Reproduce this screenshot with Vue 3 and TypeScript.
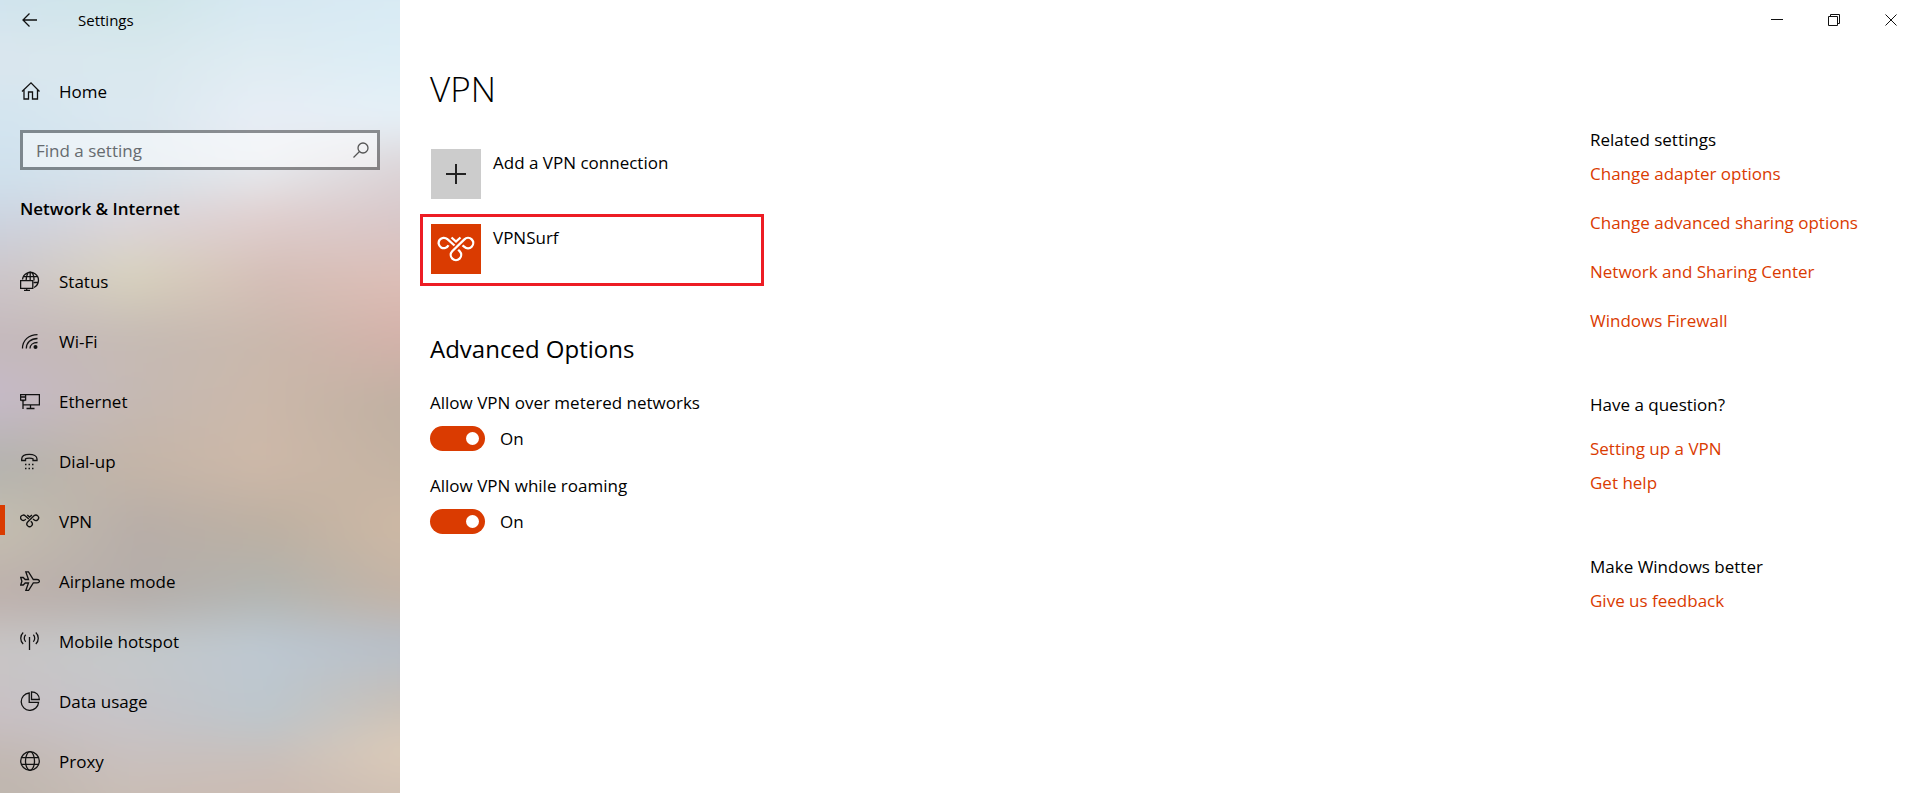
<script setup lang="ts">
import { ref } from 'vue'

interface NavItem {
  id: string
  label: string
}

const navItems: NavItem[] = [
  { id: 'status', label: 'Status' },
  { id: 'wifi', label: 'Wi-Fi' },
  { id: 'ethernet', label: 'Ethernet' },
  { id: 'dialup', label: 'Dial-up' },
  { id: 'vpn', label: 'VPN' },
  { id: 'airplane', label: 'Airplane mode' },
  { id: 'hotspot', label: 'Mobile hotspot' },
  { id: 'data', label: 'Data usage' },
  { id: 'proxy', label: 'Proxy' },
]

const vpnPath =
  'M17.500 21.300A5.200 5.200 0 1 1 16.400 15.200L23.500 21.500M20.500 13.500l4.500 4 4.500-4M31.500 21.300l1.900 1.500A5.200 5.200 0 1 0 33.400 15.300L21.200 27.300A5.200 5.200 0 1 0 28.700 27.300L27.200 25.800'

const active = ref('vpn')
const query = ref('')
const metered = ref(true)
const roaming = ref(true)

const relatedLinks: string[] = [
  'Change adapter options',
  'Change advanced sharing options',
  'Network and Sharing Center',
  'Windows Firewall',
]
</script>

<template>
  <div class="window">
    <aside class="sidebar">
      <div class="backdrop" aria-hidden="true">
        <div class="washes">
          <div class="wash wash-1"></div>
          <div class="wash wash-2"></div>
          <div class="wash wash-3"></div>
          <div class="wash wash-4"></div>
        </div>
      </div>

      <header class="titlebar">
        <button class="back" type="button" aria-label="Back">
          <svg width="16" height="14" viewBox="0 0 16 14"><path d="M7.500 .5 1 7l6.500 6.500M1 7h14" /></svg>
        </button>
        <span class="app-name">Settings</span>
      </header>

      <a class="home" href="#home">
        <svg class="icon" width="20" height="20" viewBox="0 0 20 20">
          <path d="M2 10.500 11 1.800l8.500 8.700M4 8.700v9.300h4.500v-7h4v7h5V8.700" />
        </svg>
        <span class="nav-label">Home</span>
      </a>

      <form class="search" role="search" @submit.prevent>
        <input v-model="query" type="text" placeholder="Find a setting" aria-label="Find a setting" />
        <button type="submit" aria-label="Search">
          <svg width="16" height="16" viewBox="0 0 16 16"><circle cx="10" cy="6" r="5" /><path d="M6.500 9.500.5 15.500" /></svg>
        </button>
      </form>

      <h2 class="section">Network &amp; Internet</h2>

      <nav class="nav" aria-label="Network &amp; Internet">
        <a
          v-for="item in navItems"
          :key="item.id"
          :href="'#' + item.id"
          class="nav-item"
          :class="{ active: active === item.id }"
          @click.prevent="active = item.id"
        >
          <svg class="icon" width="20" height="20" viewBox="0 0 20 20">
            <g v-if="item.id === 'status'">
              <path d="M2.500 8.500a8 8 0 1 1 11.500 8M3.500 5.700h14M13.500 11.500h4.500M6.200 9c0-4 1.500-8 4-8s4 4 3.800 8.500M10.200 1v8" />
              <path d="M.6 9.600h12.200v7.800H.6zM6.700 17.500v2M4 19.400h6" />
            </g>
            <g v-else-if="item.id === 'wifi'">
              <path d="M2.500 17.500C2.500 9 9 3.600 17.500 3.600M6.300 17.500c0-6 4.500-10 11.200-10M10 17.500c0-3.500 3-6 7.500-6" />
              <circle class="solid" cx="15.500" cy="16" r="2" />
            </g>
            <g v-else-if="item.id === 'ethernet'">
              <path d="M6 3.700h13.400v10.100H3.500M10.500 14v3.500M6.500 17.500h8M3 10v8" />
              <path d="M.6 3.600h5v5.500h-5zM.6 6h5M1.500 9.500h3" />
            </g>
            <g v-else-if="item.id === 'dialup'">
              <path d="M1.700 9.500V8c0-3 3.500-4.600 7.600-4.600S17 5 17 8v1.500h-4V7.800c-1.500-1-6-1-7.500 0v1.700z" />
              <path class="dots" d="M5 13.500h1.500M8.500 13.500H10M12 13.500h1.500M5 17.500h1.500M8.500 17.500H10M12 17.500h1.500" />
            </g>
            <g v-else-if="item.id === 'vpn'" class="small-vpn" transform="scale(.52) translate(-6.500 -6)">
              <path :d="vpnPath" />
            </g>
            <g v-else-if="item.id === 'airplane'">
              <path d="M.7 6.500h2.500l2 2h3.300L5.800.8h2.700l4.800 7.700H17c1.300 0 2.400.7 2.400 1.700s-1.100 1.700-2.400 1.700h-3.700L8.500 19.500H5.800L8.500 12H5.200l-2 2H.7l1.200-3.800z" />
            </g>
            <g v-else-if="item.id === 'hotspot'">
              <path d="M9.500 6v13M3.200 1.500C-.1 4.500-.1 10 3.200 13M5.700 3.700C3.800 5.500 3.800 9 5.700 10.800M15.800 1.500c3.300 3 3.300 8.500 0 11.500M13.300 3.700c1.900 1.800 1.900 5.300 0 7.100" />
            </g>
            <g v-else-if="item.id === 'data'">
              <path d="M9.200 2A8.700 8.700 0 1 0 18.600 11.300H9.200z" />
              <path d="M11.500.8c4.500 0 7.800 3 7.800 7.700h-7.800z" />
            </g>
            <g v-else>
              <circle cx="10" cy="10" r="9.300" />
              <ellipse cx="10" cy="10" rx="4.500" ry="9.300" />
              <path d="M1.500 6.700h17M1.500 13.300h17" />
            </g>
          </svg>
          <span class="nav-label">{{ item.label }}</span>
        </a>
      </nav>
    </aside>

    <div class="content">
      <div class="controls">
        <button type="button" aria-label="Minimize">
          <svg width="12" height="12" viewBox="0 0 12 12"><path d="M0 5.500h12" /></svg>
        </button>
        <button type="button" aria-label="Restore">
          <svg width="12" height="12" viewBox="0 0 12 12"><path d="M.5 2.500h9v9h-9zM2.500 2.500v-2h9v9h-2" /></svg>
        </button>
        <button type="button" aria-label="Close">
          <svg width="12" height="12" viewBox="0 0 12 12"><path d="m.5.5 11 11M11.500.5l-11 11" /></svg>
        </button>
      </div>

      <div class="columns">
        <main class="main">
          <h1>VPN</h1>

          <button class="entry" type="button">
            <span class="tile add">
              <svg width="20" height="20" viewBox="0 0 20 20"><path d="M10 0v20M0 10h20" /></svg>
            </span>
            <span class="entry-label">Add a VPN connection</span>
          </button>

          <button class="entry highlighted" type="button">
            <span class="tile vpn-tile">
              <svg width="50" height="50" viewBox="0 0 50 50"><path :d="vpnPath" /></svg>
            </span>
            <span class="entry-label">VPNSurf</span>
          </button>

          <h2>Advanced Options</h2>

          <div class="option">
            <label for="metered">Allow VPN over metered networks</label>
            <div class="switch">
              <input id="metered" v-model="metered" type="checkbox" role="switch" />
              <span>{{ metered ? 'On' : 'Off' }}</span>
            </div>
          </div>
          <div class="option">
            <label for="roaming">Allow VPN while roaming</label>
            <div class="switch">
              <input id="roaming" v-model="roaming" type="checkbox" role="switch" />
              <span>{{ roaming ? 'On' : 'Off' }}</span>
            </div>
          </div>
        </main>

        <aside class="related">
          <section>
            <h3>Related settings</h3>
            <div class="links spaced">
              <a v-for="link in relatedLinks" :key="link" href="#related">{{ link }}</a>
            </div>
          </section>
          <section>
            <h3>Have a question?</h3>
            <div class="links help">
              <a href="#setup">Setting up a VPN</a>
              <a href="#help">Get help</a>
            </div>
          </section>
          <section>
            <h3>Make Windows better</h3>
            <div class="links">
              <a href="#feedback">Give us feedback</a>
            </div>
          </section>
        </aside>
      </div>
    </div>
  </div>
</template>

<style>
body {
  margin: 0;
  background: #fff;
}
</style>

<style scoped>
.window {
  display: flex;
  min-height: 100vh;
  color: #000;
  font-family: "Segoe UI", "Open Sans", "Noto Sans", sans-serif;
  font-size: 17px;
  line-height: 24px;
}

button {
  padding: 0;
  border: 0;
  background: none;
  color: inherit;
  font: inherit;
  text-align: left;
}

a {
  color: inherit;
  text-decoration: none;
}

h1,
h2,
h3 {
  margin: 0;
  font-size: 17px;
  font-weight: 400;
}

svg {
  display: block;
  fill: none;
  stroke: #111;
  stroke-width: 1.3;
}

.solid {
  fill: #111;
  stroke: none;
}

.dots {
  stroke-width: 1.4;
}

.small-vpn {
  stroke-width: 2.6;
}

/* Sidebar */
.sidebar {
  position: relative;
  box-sizing: border-box;
  flex: 0 0 400px;
  isolation: isolate;
}

.backdrop {
  position: absolute;
  inset: 0;
  z-index: -1;
  overflow: hidden;
}

.washes {
  position: absolute;
  inset: -36px;
  filter: blur(14px);
}

.wash {
  position: absolute;
  inset: 0;
}

.wash-1 {
  background: linear-gradient(#d0e4ee 4%, #dbe7ee 11%, #d3e5f0 18%, #cfe0ec 25%, #cdd5e2 29%, #cdc6ca 36%, #c4b8bb 44%, #c6bac8 50%, #b4b3ae 58%, #c4beb0 65%, #bdb0ac 73%, #c8c6c6 79%, #c8c0c4 87%, #c2b8b2 92%, #beb6ae 97%);
}

.wash-2 {
  background: linear-gradient(#cfe5e8 4%, #d9e8ee 11%, #dbe8f0 18%, #d8e2ea 25%, #dbd4d8 30%, #d8d2be 36%, #c6bbb4 43%, #c5b9b3 50%, #c4b5a8 58%, #b8aea8 65%, #b5aeaa 73%, #c4c9cb 79%, #c6c4c8 87%, #c9c0be 92%, #c9bdb4 97%);
  mask-image: linear-gradient(90deg, transparent 8%, #000 36%);
}

.wash-3 {
  background: linear-gradient(#d6e8f2 4%, #dfecf2 11%, #e8eef6 18%, #e6e8ec 24%, #e0d0d0 29%, #d5bfb8 36%, #c9b8ac 44%, #cbb8aa 50%, #cdb8a8 58%, #bdb0a2 65%, #b2b3ae 72%, #bdc8d2 79%, #bdc6cc 87%, #c9bfba 92%, #ccbbb2 97%);
  mask-image: linear-gradient(90deg, transparent 36%, #000 64%);
}

.wash-4 {
  background: linear-gradient(#d8eaf3 4%, #dcedf5 11%, #e6f0f7 18%, #dcd6d9 23%, #d8c8ca 29%, #dcbdb5 37%, #d4b2aa 43%, #c0b0a2 51%, #c4b3a3 58%, #cdb8a4 65%, #c2b3a6 73%, #b6bfca 79%, #c6bfb8 85%, #dbcab8 91%, #cfc0b4 97%);
  mask-image: linear-gradient(90deg, transparent 64%, #000 92%);
}

.titlebar {
  display: flex;
  align-items: center;
  gap: 40px;
  height: 40px;
  padding-left: 22px;
}

.app-name {
  font-size: 15px;
}

.home {
  display: flex;
  align-items: center;
  gap: 19px;
  height: 40px;
  margin-top: 31px;
  padding-left: 20px;
}

.nav-label {
  padding-top: 2px;
}

.search {
  display: flex;
  align-items: center;
  box-sizing: border-box;
  height: 40px;
  margin: 19px 20px 0;
  padding-right: 8px;
  border: 3px solid rgb(0 0 0 / 40%);
  background: rgb(255 255 255 / 50%);
  background-clip: padding-box;
}

.search input {
  flex: 1;
  min-width: 0;
  padding: 2px 13px 0;
  border: 0;
  outline: 0;
  background: none;
  color: inherit;
  font: inherit;
}

.search input::placeholder {
  color: #666b6f;
  opacity: 1;
}

.search svg {
  stroke: #555;
}

.section {
  margin: 27px 20px 0;
  font-weight: 600;
}

.nav {
  margin-top: 30px;
}

.nav-item {
  position: relative;
  display: flex;
  align-items: center;
  gap: 19px;
  height: 60px;
  padding-left: 20px;
}

.nav-item.active::before {
  position: absolute;
  top: 14px;
  bottom: 16px;
  left: 0;
  width: 5px;
  background: #da3b01;
  content: "";
}

/* Content */
.content {
  flex: 1;
  min-width: 0;
}

.controls {
  display: flex;
  justify-content: flex-end;
  height: 40px;
  padding-right: 1px;
}

.controls button {
  display: grid;
  place-items: center;
  width: 57px;
}

.controls svg {
  stroke-width: 1;
}

.columns {
  display: flex;
  justify-content: space-between;
}

.main {
  padding: 25px 0 0 20px;
}

h1 {
  margin-left: 10px;
  font-size: 35px;
  font-weight: 300;
  line-height: 48px;
}

.entry {
  display: flex;
  gap: 12px;
  box-sizing: border-box;
  width: 344px;
  height: 72px;
  margin-top: 3px;
  padding: 7px 8px;
  border: 3px solid transparent;
}

h1 + .entry {
  margin-top: 26px;
}

.entry.highlighted {
  border-color: #ed1c24;
}

.tile {
  display: grid;
  place-items: center;
  width: 50px;
  height: 50px;
}

.add {
  background: #ccc;
}

.add svg {
  stroke: #222;
  stroke-width: 2;
}

.vpn-tile {
  background: #da3b01;
}

.vpn-tile svg {
  stroke: #fff;
  stroke-width: 2.3;
}

.entry-label {
  margin-top: 2px;
}

.main h2 {
  margin: 47px 0 0 10px;
  font-size: 24px;
  line-height: 32px;
}

.option {
  margin: 26px 0 0 10px;
}

.option + .option {
  margin-top: 23px;
}

.option label {
  display: block;
}

.switch {
  display: flex;
  align-items: center;
  gap: 15px;
  height: 25px;
  margin-top: 11px;
}

.switch input {
  display: flex;
  align-items: center;
  box-sizing: border-box;
  width: 55px;
  height: 25px;
  margin: 0;
  padding: 0 6px;
  border-radius: 13px;
  background: #999;
  appearance: none;
}

.switch input:checked {
  justify-content: flex-end;
  background: #da3b01;
}

.switch input::before {
  width: 13px;
  height: 13px;
  border-radius: 50%;
  background: #fff;
  content: "";
}

/* Related links */
.related {
  box-sizing: border-box;
  width: 330px;
  padding-top: 88px;
}

.related section + section {
  margin-top: 60px;
}

.links {
  display: flex;
  flex-direction: column;
  align-items: flex-start;
  gap: 10px;
  margin-top: 10px;
  color: #da3b01;
}

.links.spaced {
  gap: 25px;
}

.links.help {
  margin-top: 20px;
}
</style>
